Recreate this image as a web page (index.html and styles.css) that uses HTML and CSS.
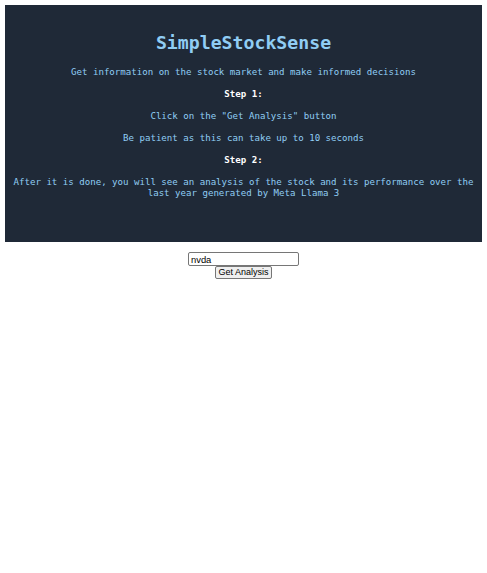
FILE: index.html
```html
<!DOCTYPE html>
<html>
<head>
<meta charset="utf-8">
<link rel="stylesheet" href="styles.css">
</head>
<body>
<div class="hero">
  <h1 class="title">SimpleStockSense</h1>
  <p class="text sub">Get information on the stock market and make informed decisions</p>
  <p class="text step">Step 1:</p>
  <p class="text">Click on the "Get Analysis" button</p>
  <p class="text">Be patient as this can take up to 10 seconds</p>
  <p class="text step">Step 2:</p>
  <p class="text">After it is done, you will see an analysis of the stock and its performance over the last year generated by Meta Llama 3</p>
</div>
<form class="form">
  <input class="ticker" type="text" value="nvda">
  <button class="btn" type="button">Get Analysis</button>
</form>
</body>
</html>
```
FILE: styles.css
```css
body {
  margin: 5px;
  background: #ffffff;
  font-family: "DejaVu Sans Mono", "Liberation Mono", monospace;
}
.hero {
  background: #1f2937;
  padding: 27px 5px 43px;
  text-align: center;
}
.title {
  margin: 0 0 13px;
  font-size: 18.2px;
  line-height: 22px;
  font-weight: bold;
  color: #90cdf4;
}
.text {
  margin: 0 0 11px;
  font-size: 9.1px;
  line-height: 11px;
  color: #90cdf4;
}
.text:last-child {
  margin-bottom: 0;
}
.step {
  color: #ffffff;
  font-weight: bold;
}
.form {
  margin-top: 10px;
  display: flex;
  flex-direction: column;
  align-items: center;
}
.ticker {
  box-sizing: border-box;
  width: 111px;
  height: 14px;
  padding: 0 2px;
  font-family: "Liberation Sans", Arial, sans-serif;
  font-size: 9.4px;
  border: 1px solid #767676;
  border-radius: 2px;
  margin: 0;
}
.btn {
  box-sizing: border-box;
  width: 57px;
  height: 13px;
  padding: 0;
  font-family: "Liberation Sans", Arial, sans-serif;
  font-size: 9px;
  line-height: 11px;
  background: #efefef;
  border: 1px solid #767676;
  border-radius: 2px;
  margin: 0;
  color: #000;
}
```
